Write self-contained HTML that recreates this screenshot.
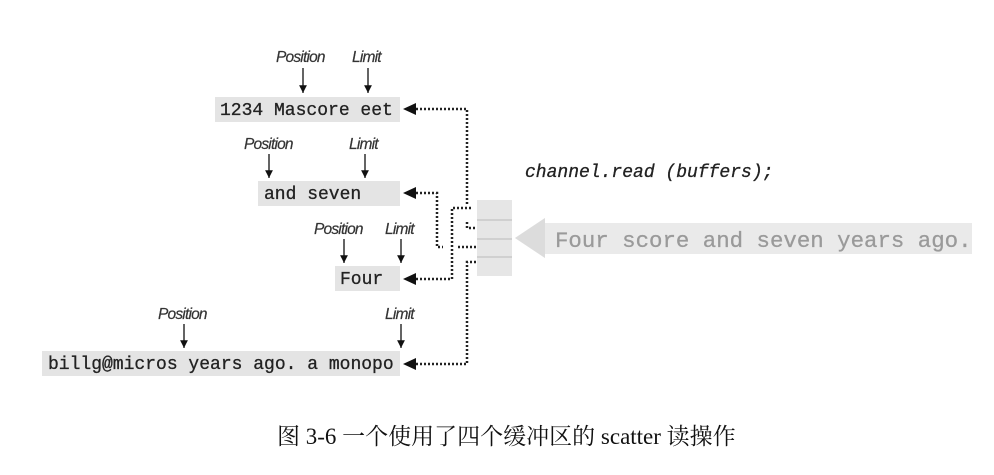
<!DOCTYPE html>
<html><head><meta charset="utf-8"><style>
html,body{margin:0;padding:0;background:#fff;width:994px;height:475px;overflow:hidden}
svg{display:block}
.m{font-family:"Liberation Mono",monospace;font-size:18px;fill:#222;stroke:#222;stroke-width:0.3}
.l{font-family:"Liberation Sans",sans-serif;font-style:italic;font-size:15.5px;fill:#333;letter-spacing:-0.8px;stroke:#333;stroke-width:0.2}
.d{stroke:#222;stroke-width:2.5;stroke-dasharray:2 2;fill:none}
</style></head><body>
<svg width="994" height="475" viewBox="0 0 994 475">
<defs>
<marker id="ah" viewBox="0 0 10 10" refX="10" refY="5" markerWidth="6" markerHeight="6" orient="auto"><path d="M0 0L10 5L0 10z" fill="#111"/></marker>
</defs>
<rect x="215" y="97" width="185" height="25" fill="#e4e4e4"/>
<text class="m" x="220" y="115">1234 Mascore eet</text>
<rect x="258" y="181" width="142" height="25" fill="#e4e4e4"/>
<text class="m" x="264" y="199">and seven</text>
<rect x="335" y="266" width="65" height="25" fill="#e4e4e4"/>
<text class="m" x="340" y="284">Four</text>
<rect x="42" y="351" width="358" height="25" fill="#e4e4e4"/>
<text class="m" x="48" y="369">billg@micros years ago. a monopo</text>
<text class="l" x="276" y="62">Position</text><text class="l" x="352" y="62">Limit</text>
<text class="l" x="244" y="149">Position</text><text class="l" x="349" y="149">Limit</text>
<text class="l" x="314" y="234">Position</text><text class="l" x="385" y="234">Limit</text>
<text class="l" x="158" y="319">Position</text><text class="l" x="385" y="319">Limit</text>
<g stroke="#111" stroke-width="1.3">
<line x1="303" y1="68" x2="303" y2="93" marker-end="url(#ah)"/>
<line x1="368" y1="68" x2="368" y2="93" marker-end="url(#ah)"/>
<line x1="269" y1="154" x2="269" y2="178" marker-end="url(#ah)"/>
<line x1="365" y1="154" x2="365" y2="178" marker-end="url(#ah)"/>
<line x1="344" y1="239" x2="344" y2="263" marker-end="url(#ah)"/>
<line x1="401" y1="239" x2="401" y2="263" marker-end="url(#ah)"/>
<line x1="184" y1="324" x2="184" y2="348" marker-end="url(#ah)"/>
<line x1="401" y1="324" x2="401" y2="348" marker-end="url(#ah)"/>
</g>
<g fill="#111">
<path d="M403 109L416 103L416 115z"/>
<path d="M403 193L416 187L416 199z"/>
<path d="M403 279L416 273L416 285z"/>
<path d="M403 364L416 358L416 370z"/>
</g>
<path class="d" d="M416 109H467V205"/>
<path class="d" d="M467 222V228H475"/>
<path class="d" d="M416 193H437V247H443"/>
<path class="d" d="M458 247H476"/>
<path class="d" d="M416 279H452V208H472"/>
<path class="d" d="M476 262H467V364H416"/>
<rect x="477" y="200" width="35" height="76" fill="#e6e6e6"/>
<g stroke="#bbb" stroke-width="1"><line x1="477" y1="220" x2="512" y2="220"/><line x1="477" y1="239" x2="512" y2="239"/><line x1="477" y1="257" x2="512" y2="257"/></g>
<path d="M515 238L545 218V223H972V254H545V258z" fill="#eaeaea"/>
<path d="M515 238L545 218V258z" fill="#dcdcdc"/>
<text class="m" x="555" y="247" style="font-size:22.4px;fill:#9a9a9a;stroke:#9a9a9a">Four score and seven years ago.</text>
<text class="m" x="525" y="177" style="font-style:italic">channel.read (buffers);</text>
<text x="277" y="444" style="font-family:'Liberation Serif','Noto Serif CJK SC',serif;font-size:23px;fill:#111">图 3-6 一个使用了四个缓冲区的 scatter 读操作</text>
</svg>
</body></html>
